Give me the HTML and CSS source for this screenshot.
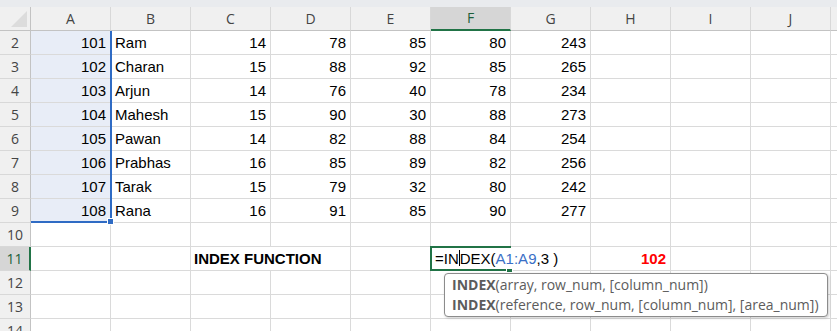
FILE: index.html
```html
<html>
<head>
    <meta charset="UTF-8">
    <title>INDEX Function</title>
    <link rel="stylesheet" href="styles.css">
</head>
<body>
    <div class="top-strip"></div>
    <div class="sheet-wrap">
        <div class="sheet">
            <!-- column headers -->
            <div class="corner"></div>
            <div class="ch">A</div><div class="ch">B</div><div class="ch">C</div><div class="ch">D</div>
            <div class="ch">E</div><div class="ch active-col">F</div><div class="ch">G</div><div class="ch">H</div>
            <div class="ch">I</div><div class="ch">J</div><div class="ch"></div>

            <div class="rh">2</div><div class="c n sel">101</div><div class="c">Ram</div><div class="c n">14</div><div class="c n">78</div><div class="c n">85</div><div class="c n">80</div><div class="c n">243</div><div class="c"></div><div class="c"></div><div class="c"></div><div class="c"></div>
            <div class="rh">3</div><div class="c n sel">102</div><div class="c">Charan</div><div class="c n">15</div><div class="c n">88</div><div class="c n">92</div><div class="c n">85</div><div class="c n">265</div><div class="c"></div><div class="c"></div><div class="c"></div><div class="c"></div>
            <div class="rh">4</div><div class="c n sel">103</div><div class="c">Arjun</div><div class="c n">14</div><div class="c n">76</div><div class="c n">40</div><div class="c n">78</div><div class="c n">234</div><div class="c"></div><div class="c"></div><div class="c"></div><div class="c"></div>
            <div class="rh">5</div><div class="c n sel">104</div><div class="c">Mahesh</div><div class="c n">15</div><div class="c n">90</div><div class="c n">30</div><div class="c n">88</div><div class="c n">273</div><div class="c"></div><div class="c"></div><div class="c"></div><div class="c"></div>
            <div class="rh">6</div><div class="c n sel">105</div><div class="c">Pawan</div><div class="c n">14</div><div class="c n">82</div><div class="c n">88</div><div class="c n">84</div><div class="c n">254</div><div class="c"></div><div class="c"></div><div class="c"></div><div class="c"></div>
            <div class="rh">7</div><div class="c n sel">106</div><div class="c">Prabhas</div><div class="c n">16</div><div class="c n">85</div><div class="c n">89</div><div class="c n">82</div><div class="c n">256</div><div class="c"></div><div class="c"></div><div class="c"></div><div class="c"></div>
            <div class="rh">8</div><div class="c n sel">107</div><div class="c">Tarak</div><div class="c n">15</div><div class="c n">79</div><div class="c n">32</div><div class="c n">80</div><div class="c n">242</div><div class="c"></div><div class="c"></div><div class="c"></div><div class="c"></div>
            <div class="rh">9</div><div class="c n sel">108</div><div class="c">Rana</div><div class="c n">16</div><div class="c n">91</div><div class="c n">85</div><div class="c n">90</div><div class="c n">277</div><div class="c"></div><div class="c"></div><div class="c"></div><div class="c"></div>

            <div class="rh">10</div><div class="c"></div><div class="c"></div><div class="c"></div><div class="c"></div><div class="c"></div><div class="c"></div><div class="c"></div><div class="c"></div><div class="c"></div><div class="c"></div><div class="c"></div>

            <div class="rh active-row">11</div><div class="c"></div><div class="c"></div>
            <div class="c label">INDEX FUNCTION</div>
            <div class="c"></div>
            <div class="c editing"><span class="formula">=IN<span class="caret"></span>DEX(<span class="ref">A1:A9</span>,3 )</span></div>
            <div class="c"></div>
            <div class="c n result">102</div>
            <div class="c"></div><div class="c"></div><div class="c"></div>

            <div class="rh">12</div><div class="c"></div><div class="c"></div><div class="c"></div><div class="c"></div><div class="c"></div><div class="c"></div><div class="c"></div><div class="c"></div><div class="c"></div><div class="c"></div><div class="c"></div>
            <div class="rh">13</div><div class="c"></div><div class="c"></div><div class="c"></div><div class="c"></div><div class="c"></div><div class="c"></div><div class="c"></div><div class="c"></div><div class="c"></div><div class="c"></div><div class="c"></div>
            <div class="rh">14</div><div class="c"></div><div class="c"></div><div class="c"></div><div class="c"></div><div class="c"></div><div class="c"></div><div class="c"></div><div class="c"></div><div class="c"></div><div class="c"></div><div class="c"></div>
        </div>

        <!-- selection A2:A9 and active cell F11, same grid laid over the sheet -->
        <div class="sheet overlay">
            <div class="selection"></div>
            <div class="active-cell"></div>
        </div>
    </div>

    <div class="tooltip">
        <div><b>INDEX</b>(array, row_num, [column_num])</div>
        <div><b>INDEX</b>(reference, row_num, [column_num], [area_num])</div>
    </div>
</body>
</html>
```

FILE: styles.css
```css
html, body {
    margin: 0;
    padding: 0;
    height: 331px;
    overflow: hidden;
    background: #fff;
    font-family: 'Liberation Sans', Arial, sans-serif;
}

.top-strip {
    height: 7px;
    background: #e9ebee;
}

.sheet-wrap {
    display: grid;
    width: max-content;
}

.sheet {
    grid-area: 1 / 1;
    display: grid;
    grid-template-columns: 31px repeat(11, 80px);
    grid-auto-rows: 24px;
}

.overlay {
    pointer-events: none;
    z-index: 2;
}

.corner {
    background: #f0f0f0;
    border-right: 1px solid #c3c3c3;
    border-bottom: 1px solid #c3c3c3;
    display: flex;
    justify-content: flex-end;
    align-items: flex-end;
    padding: 0 3px 3px 0;
}

.corner::after {
    content: "";
    width: 16px;
    height: 16px;
    background: #dcdcdc;
    clip-path: polygon(100% 0, 100% 100%, 0 100%);
}

.ch, .rh {
    background: #f0f0f0;
    color: #444;
    font-family: 'Open Sans', 'Noto Sans', sans-serif;
    font-size: 14px;
    line-height: 23px;
    text-align: center;
}

.ch {
    border-right: 1px solid #d8d8d8;
    border-bottom: 1px solid #c3c3c3;
}

.rh {
    border-right: 1px solid #c3c3c3;
    border-bottom: 1px solid #d8d8d8;
}

.ch.active-col {
    background: #d6d6d6;
    color: #1d5e3a;
    border-bottom: 2px solid #217346;
    line-height: 22px;
}

.rh.active-row {
    background: #d6d6d6;
    color: #1d5e3a;
    border-right: 2px solid #217346;
}

.c {
    border-right: 1px solid #dadada;
    border-bottom: 1px solid #dadada;
    font-size: 15px;
    line-height: 24px;
    height: 23px;
    padding: 0 4px;
    white-space: nowrap;
    color: #000;
}

.n {
    text-align: right;
}

.sel {
    background: #e8edf7;
}

.label {
    grid-column: span 2;
    font-weight: bold;
    padding-left: 3px;
}

.result {
    color: #ff0000;
    font-weight: bold;
}

.editing {
    overflow: visible;
    padding-left: 4px;
}

.formula {
    position: relative;
    z-index: 3;
    display: inline-block;
    background: #fff;
    height: 21px;
    margin-top: 1px;
    line-height: 22px;
    padding-right: 3px;
}

.formula .ref {
    color: #3a6fc6;
}

.caret {
    display: inline-block;
    width: 0;
    height: 16px;
    border-left: 1px solid #000;
    vertical-align: -2px;
}

.selection {
    grid-column: 2;
    grid-row: 2 / 10;
    margin-right: -1px;
    border-right: 2px solid #2f6bc4;
    border-bottom: 2px solid #2f6bc4;
    position: relative;
}

.selection::after {
    content: "";
    position: absolute;
    right: -4px;
    bottom: -4px;
    width: 5px;
    height: 5px;
    background: #2f6bc4;
    border: 1px solid #fff;
}

.active-cell {
    grid-column: 7;
    grid-row: 11;
    margin: -1px 0 0 -1px;
    border: 2px solid #217346;
    position: relative;
}

.active-cell::after {
    content: "";
    position: absolute;
    right: -4px;
    bottom: -4px;
    width: 5px;
    height: 5px;
    background: #217346;
    border: 1px solid #fff;
}

.tooltip {
    position: absolute;
    left: 444px;
    top: 273px;
    width: 384px;
    height: 44px;
    box-sizing: border-box;
    background: #fff;
    border: 1px solid #8c8c8c;
    border-radius: 4px;
    box-shadow: 1px 1px 3px rgba(0, 0, 0, 0.2);
    padding: 1px 7px;
    color: #5c5c5c;
    font-family: 'Open Sans', 'Noto Sans', sans-serif;
    font-size: 14px;
    line-height: 20px;
    white-space: nowrap;
    z-index: 5;
}

.tooltip b {
    font-weight: bold;
}
```
